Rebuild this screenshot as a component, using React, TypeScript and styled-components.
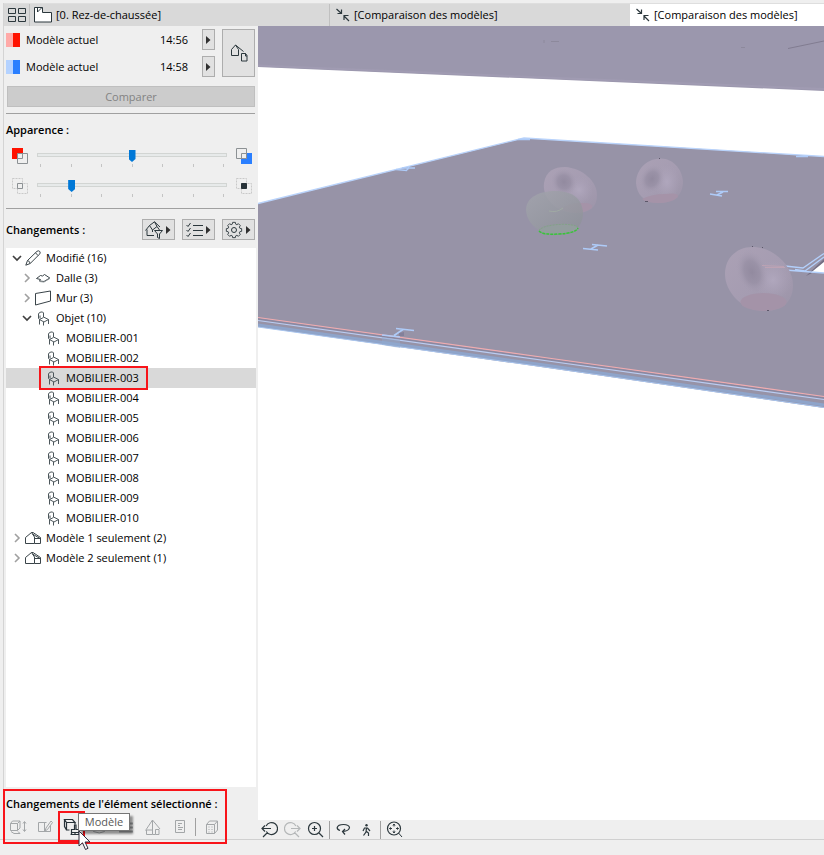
import React, { useState } from "react";
import styled, { createGlobalStyle, css } from "styled-components";

const GlobalStyle = createGlobalStyle`
  * { box-sizing: border-box; }
  body {
    margin: 0;
    background: #efefef;
    color: #000;
    font-family: "Open Sans", "Noto Sans", sans-serif;
    font-size: 11px;
    line-height: 20px;
  }
  button, input { font: inherit; color: inherit; margin: 0; padding: 0; }
  h2 { margin: 0; font-size: 11px; font-weight: 600; line-height: 20px; white-space: nowrap; }
  ul { margin: 0; padding: 0; list-style: none; }
  svg { display: block; flex: none; }
`;

const Page = styled.div`
  display: flex;
  flex-direction: column;
  min-height: 100vh;
  padding-top: 3px;
`;

const Workspace = styled.div`
  flex: 1;
  display: flex;
  flex-direction: column;
  margin-left: 3px;
  border-left: 1px solid #d4d4d4;
`;

const TabBar = styled.nav`
  display: flex;
  height: 23px;
  background: #d9d9d9;
  border-top: 1px solid #dedede;
`;

const OverviewButton = styled.button`
  width: 25px;
  border: 0;
  background: none;
  display: grid;
  place-items: center;
`;

const Tab = styled.button<{ $active?: boolean; $inset?: number }>`
  flex: 0 0 300px;
  display: flex;
  align-items: center;
  gap: 4px;
  padding: 0 ${(p) => p.$inset ?? 6}px;
  border: 0;
  border-left: 1px solid ${(p) => (p.$active ? "#d9d9d9" : "#c0c0c0")};
  background: ${(p) => (p.$active ? "#fff" : "none")};
  white-space: nowrap;

  &:last-child { flex: 1 0 194px; }
`;

const Columns = styled.div`
  flex: 1;
  display: flex;
`;

const Panel = styled.aside`
  flex: 0 0 254px;
  display: flex;
  flex-direction: column;
  padding-left: 2px;
`;

const Models = styled.section`
  display: grid;
  grid-template-columns: 14px 1fr auto 13px 40px;
  grid-template-rows: 21px 21px;
  row-gap: 6px;
  align-items: center;
  margin: 3px 3px 0 0;
`;

const Swatch = styled.span<{ $light: string; $dark: string }>`
  height: 14px;
  background: linear-gradient(90deg, ${(p) => p.$light} 50%, ${(p) => p.$dark} 50%);
`;

const ModelName = styled.span`
  padding-left: 6px;
`;

const ModelTime = styled.time`
  padding-right: 14px;
`;

const buttonFace = css`
  border: 1px solid #adadad;
  background: #e1e1e1;
`;

const ArrowButton = styled.button`
  ${buttonFace}
  align-self: stretch;
  display: grid;
  place-items: center;
`;

const PickButton = styled.button`
  ${buttonFace}
  grid-column: 5;
  grid-row: 1 / 3;
  align-self: stretch;
  display: grid;
  place-items: center;
  margin-left: 7px;
`;

const CompareButton = styled.button`
  height: 21px;
  margin: 9px 3px 0 1px;
  border: 1px solid #bfbfbf;
  background: #cccccc;
  color: #838383;
  line-height: 19px;
`;

const Divider = styled.hr<{ $space: number }>`
  align-self: stretch;
  height: 1px;
  margin: ${(p) => p.$space}px 3px 0 0;
  border: 0;
  background: #a0a0a0;
`;

const Appearance = styled.section`
  margin-top: 6px;

  h2 { margin-bottom: 1px; }
`;

const SliderRow = styled.div`
  display: flex;
  align-items: center;
  height: 30px;
  padding: 0 6px;
`;

const SliderBody = styled.label`
  flex: 1;
  align-self: flex-start;
  margin: 9px 9px 0;
`;

const Range = styled.input`
  appearance: none;
  display: block;
  width: 100%;
  height: 10px;
  background: none;

  &::-webkit-slider-runnable-track {
    height: 4px;
    border: 1px solid #d2d5d3;
    background: #e7eaea;
  }
  &::-webkit-slider-thumb {
    appearance: none;
    width: 7px;
    height: 12px;
    margin-top: -4px;
    background: #0078d7;
    clip-path: polygon(0 0, 100% 0, 100% 75%, 50% 100%, 0 75%);
  }
`;

const Ticks = styled.span`
  display: flex;
  justify-content: space-between;
  height: 3px;
  margin: 4px 3px 0;
`;

const Tick = styled.i`
  width: 1px;
  background: #c4c4c4;
`;

const ChangesHeader = styled.header`
  display: flex;
  align-items: center;
  gap: 7px;
  margin: 10px 3px 0 0;

  h2 { flex: 1; }
`;

const MenuButton = styled.button`
  ${buttonFace}
  display: flex;
  align-items: center;
  justify-content: space-between;
  width: 33px;
  height: 21px;
  padding: 0 3px 0 2px;
`;

const Tree = styled.ul`
  flex: 1;
  margin: 8px 2px 0 0;
  background: #fff;
`;

const TreeRow = styled.button<{ $level: number; $selected?: boolean }>`
  display: flex;
  align-items: center;
  width: 100%;
  height: 20px;
  padding-left: ${(p) => 6 + p.$level * 10}px;
  border: 0;
  background: ${(p) => (p.$selected ? "#d9d9d9" : "none")};
  text-align: left;
`;

const Twisty = styled.span`
  width: 10px;
  margin-right: 3px;
`;

const RowLabel = styled.span<{ $framed?: boolean }>`
  position: relative;
  display: flex;
  align-items: center;
  gap: 5px;

  ${(p) =>
    p.$framed &&
    css`
      &::after {
        content: "";
        position: absolute;
        inset: -2px -9px -2px -6px;
        border: 2px solid #f8141a;
      }
    `}
`;

const Footer = styled.footer`
  position: relative;
  padding-top: 7px;
`;

const FooterFrame = styled.div`
  position: absolute;
  inset: 2px 31px -5px -3px;
  border: 2px solid #f8141a;
  pointer-events: none;
`;

const FooterTools = styled.div`
  display: flex;
  align-items: center;
  height: 25px;
  margin-left: -2px;
`;

const ToolSlot = styled.div`
  position: relative;
`;

const ToolButton = styled.button<{ $highlight?: boolean }>`
  position: relative;
  display: grid;
  place-items: center;
  width: 27px;
  height: 25px;
  border: 0;
  background: none;
  color: ${(p) => (p.$highlight ? "#273238" : "#a3a6a8")};

  ${(p) =>
    p.$highlight &&
    css`
      &::after {
        content: "";
        position: absolute;
        inset: -3px 0;
        border: 2px solid #f8141a;
      }
    `}
`;

const Tooltip = styled.div`
  position: absolute;
  z-index: 2;
  left: 20px;
  top: -1px;
  width: 52px;
  height: 18px;
  border: 1px solid #767676;
  background: #fff;
  box-shadow: 3px 3px 2px rgba(0, 0, 0, 0.4);
  color: #575757;
  line-height: 16px;
  text-align: center;
`;

const Pointer = styled.svg`
  position: absolute;
  z-index: 3;
  left: 20px;
  top: 16px;
`;

const Separator = styled.span`
  width: 1px;
  height: 18px;
  margin: 0 2px;
  background: #a0a0a0;
`;

const Main = styled.main`
  flex: 1;
  min-width: 0;
  display: flex;
  flex-direction: column;
`;

const Scene = styled.svg`
  flex: 1 1 0;
  width: 100%;
  min-height: 0;
  background: #fff;
`;

const NavBar = styled.div`
  display: flex;
  align-items: center;
  height: 19px;
`;

const NavButton = styled.button`
  display: grid;
  place-items: center;
  width: 23px;
  height: 19px;
  border: 0;
  background: none;
  color: #2b373c;

  &:disabled { color: #b4b7b8; }
`;

const StatusBar = styled.div`
  height: 16px;
  border-top: 1px solid #d0d0d0;
`;

type IconProps = { w?: number; h?: number; children: React.ReactNode };

const Icon = ({ w = 16, h = 16, children }: IconProps) => (
  <svg width={w} height={h} viewBox={`0 0 ${w} ${h}`} fill="none" stroke="currentColor" aria-hidden="true">
    {children}
  </svg>
);

const RightArrow = () => (
  <Icon w={5} h={8}>
    <path d="M0 0L4.500 4L0 8Z" fill="#303030" stroke="none" />
  </Icon>
);

const OverviewIcon = () => (
  <Icon w={18} h={14}>
    <path d="M.5 .5h7v5h-7zM10.500 .5h7v5h-7zM.5 8.500h7v5h-7zM10.500 8.500h7v5h-7z" stroke="#2b373c" />
  </Icon>
);

const PlanIcon = () => (
  <Icon w={18} h={16}>
    <path d="M.5 .5h8v5h9v9.500h-17z" fill="#fff" stroke="#2b373c" />
    <path d="M3.500 .5v4.500L8 .5" stroke="#2b373c" />
  </Icon>
);

const CompareIcon = () => (
  <Icon w={14} h={14}>
    <path d="M.5 1L5.500 5.500M5.500 1.500v4h-4M13 13L8 8M8 12V7.500h4.500" stroke="#2b373c" strokeWidth="1.200" />
  </Icon>
);

const HousePageIcon = () => (
  <Icon w={18} h={18}>
    <path d="M1.500 11.500V5.500L5.500 1L8.500 5.500V11.500ZM5.500 1L13.500 7.500M11.500 9.500h4l1.500 2v5.500h-5.500zM15.500 9.500v2.500h1.500" stroke="#2b373c" />
  </Icon>
);

const Gear = () => (
  <Icon w={18} h={18}>
    <g stroke="#2b373c">
      <circle cx="9" cy="9" r="2.500" />
      <path d="M7.500 1.500h3l.4 2 1.300.6 1.700-1.100 2.100 2.100-1.100 1.700.6 1.300 2 .4v3l-2 .4-.6 1.300 1.100 1.700-2.100 2.100-1.700-1.100-1.300.6-.4 2h-3l-.4-2-1.300-.6-1.700 1.100L2 14.900l1.100-1.700-.6-1.300-2-.4v-3l2-.4.6-1.300L2 5.100 4.100 3l1.700 1.100 1.300-.6z" transform="translate(.9 0) scale(.9)" />
    </g>
  </Icon>
);

const Checklist = () => (
  <Icon w={18} h={16}>
    <path d="M1.500 3l1.500 1.500L5.500 1M1.500 8l1.500 1.500L5.500 6M1.500 13l1.500 1.500L5.500 11M8 3.500h10M8 8.500h10M8 13.500h10" stroke="#2b373c" />
  </Icon>
);

const FilterHouse = () => (
  <Icon w={18} h={18}>
    <path d="M.5 9.500L4.500 4.500L9.500 .8L15 6M4.500 4.500L7.500 9L12 5.500L9.500 .8M12 5.500L14.500 9M2 8.500V14.500H9M7.500 9V11" stroke="#2b373c" />
    <path d="M9.500 9.500h8l-3 3.500v4.500l-2-1v-3.500z" fill="#e1e1e1" stroke="#2b373c" />
  </Icon>
);

const Chevron = ({ open }: { open?: boolean }) =>
  open ? (
    <Icon w={10} h={8}>
      <path d="M1 2L5 6L9 2" stroke="#404040" strokeWidth="1.700" />
    </Icon>
  ) : (
    <Icon w={10} h={10}>
      <path d="M3 1L7 5L3 9" stroke="#a0a0a0" strokeWidth="1.600" />
    </Icon>
  );

const Pencil = () => (
  <Icon>
    <path d="M.8 15.200L2.500 10.500L12 1.300Q13.500.2 14.800 1.500Q15.800 3 14.500 4.200L5.200 13.500ZM2.500 10.500Q4.800 11 5.200 13.500M10.500 2.800L13 5.500" stroke="#3a4449" />
  </Icon>
);

const Slab = () => (
  <Icon>
    <path d="M1.500 8.500L5.500 5.500L7.500 6L9.500 4.500L14.800 8L9 11.500L4.500 11L5.500 9.500Z" stroke="#3a4449" />
    <path d="M4.500 11.500L9 12L14.800 8.500" stroke="#8b9295" />
  </Icon>
);

const Wall = () => (
  <Icon>
    <path d="M.5 3.500L15.500 1V11L.5 15Z" stroke="#3a4449" />
  </Icon>
);

const Chair = () => (
  <Icon>
    <path
      d="M4.500 14.500V9.500L3.500 8.500V4Q3.800 2.500 6 2Q8 1.500 8.500 3V7L13.500 9.500V14M4.500 9.500L8.500 7.500M4.500 9.500L9 12L13.500 9.500M8.500 12V15.500M5 5.500V8.500"
      stroke="#4c565b"
    />
  </Icon>
);

const HouseModel = () => (
  <Icon>
    <path d="M.5 13.500V7.500L6.500 2.500L9.500 7V13.500ZM6.500 2.500H8L15.500 7.500V13.500H9.500M7.500 4L15 8.500H9.500" stroke="#3a4449" />
  </Icon>
);

const SideA = () => (
  <Icon>
    <path d="M0 0h11v11h-11z" fill="#ff1200" stroke="none" />
    <path d="M5.500 5.500h10v10h-10z" fill="#efefef" stroke="#8c9194" />
    <path d="M10.500 5.500v5h-5" stroke="#8c9194" />
  </Icon>
);

const SideB = () => (
  <Icon>
    <path d="M5 5h11v11h-11z" fill="#2a7fff" stroke="none" />
    <path d="M.5 .5h10v10h-10z" fill="#efefef" stroke="#8c9194" />
    <path d="M5.500 10.500v-5h5" stroke="#8c9194" />
  </Icon>
);

const Overlap = ({ solid }: { solid?: boolean }) => (
  <Icon>
    <path d="M.5 .5h10v10h-10zM5.500 5.500h10v10h-10z" stroke="#c9c9c9" strokeDasharray="2 1" />
    <path d="M5.500 5.500h5v5h-5z" fill={solid ? "#273238" : "#efefef"} stroke={solid ? "#273238" : "#8c9194"} />
  </Icon>
);

const toolIcons = {
  position: (
    <Icon w={18} h={16}>
      <path d="M1.500 4.500h7v7h-7zM1.500 4.500l2-2.500h7.500v7l-2.500 2.500M8.500 4.500l2.500-2.500M2 12.500l3 2h6l-2-2M15.500 3v9M14 4.500l1.500-2 1.500 2M14 10.500l1.500 2 1.500-2" />
    </Icon>
  ),
  shape: (
    <Icon>
      <path d="M9.500 3.500h-8v9h12v-6M7.500 3.500v9M8 12l1-3 5-7 1.500 1.500-5 7z" />
    </Icon>
  ),
  model: (
    <Icon w={18} h={18}>
      <path d="M3.500 4.500L1.500 1.500h8l2.500 3h-8.500v7.500h3M1.500 1.500v7l2 3.500M12 4.500v2" strokeWidth="1.200" />
      <path d="M11.500 7h1.500v4.500h3v3h-7.500v-3h3zM7.500 16.500h10M9 14.500l-1 2M12 14.500v2M16 14.500v2" strokeWidth="1.200" />
    </Icon>
  ),
  surface: (
    <Icon>
      <path d="M2.500 5.500h11v7q-5 3-11 0z" />
    </Icon>
  ),
  layers: (
    <Icon>
      <path d="M1 4.500h14M1 8.500h14M1 12.500h14" strokeWidth="2" />
    </Icon>
  ),
  renovation: (
    <Icon>
      <path d="M.5 11.500L7.500 1L15 10M7.500 1V15.500H1.500V11H7.500M10.500 15.500v-5h3.500v5zM7.500 15.500h3" />
    </Icon>
  ),
  properties: (
    <Icon>
      <path d="M3.500 1.500h9v12h-9zM6 4.500h4M6 6.500h2M6 8.500h5M6 10.500h4" />
    </Icon>
  ),
  building: (
    <Icon>
      <path d="M2.500 5.500h8v9h-8zM2.500 5.500l3-3.500h8l-3 3.500M13.500 2v9l-3 3.500M4.500 8h1M7.500 8h1M4.500 10.500h1M7.500 10.500h1M4.500 13h1M7.500 13h1" />
    </Icon>
  ),
};

const ZoomBackIcon = () => (
  <Icon w={17} h={17}>
    <path d="M5.100 5a6 6 0 1 1 .2 5.500M1 7.500H10M4 4.500L1 7.500L4 10.500M6.500 11.500L2 16" strokeWidth="1.200" />
  </Icon>
);

const ZoomForwardIcon = () => (
  <Icon w={17} h={17}>
    <path d="M11.900 5a6 6 0 1 0 -.2 5.500M7 7.500H16M13 4.500L16 7.500L13 10.500M10.500 11.500L15 16" strokeWidth="1.200" />
  </Icon>
);

const ZoomInIcon = () => (
  <Icon w={17} h={17}>
    <circle cx="7.500" cy="7.500" r="6" strokeWidth="1.200" />
    <path d="M7.500 5v5M5 7.500h5M12 12l4 4" strokeWidth="1.200" />
  </Icon>
);

const OrbitIcon = () => (
  <Icon w={15} h={13}>
    <path d="M4 7.500Q1 6.500 1.200 4.500Q2 1.500 7.500 1.500Q13 1.500 13.500 4.500Q13 8 7 8.500M9 6L6.500 8.500L9 11.500" strokeWidth="1.200" />
  </Icon>
);

const WalkIcon = () => (
  <Icon w={11} h={14}>
    <circle cx="5.500" cy="2.200" r="1.200" fill="currentColor" stroke="none" />
    <path d="M2 8L3.500 5H6.500L9 8M5.500 5L5 9L2.500 12.500M5.500 8.500L7.500 10V13" strokeWidth="1.200" />
  </Icon>
);

const FitIcon = () => (
  <Icon w={17} h={17}>
    <circle cx="8" cy="7.500" r="6.500" strokeWidth="1.200" />
    <path d="M12.500 12l3.500 4M8 3v2.500M8 9.500V12M3.500 7.500H6M10 7.500h2.500M7 4.500L8 3l1 1.500M7 10.500L8 12l1-1.500M5 6.500L3.500 7.500 5 8.500M11 6.500l1.500 1L11 8.500" />
  </Icon>
);

const Slider = ({ name, initial, left, right }: { name: string; initial: number; left: React.ReactNode; right: React.ReactNode }) => {
  const [value, setValue] = useState(initial);
  return (
    <SliderRow>
      {left}
      <SliderBody>
        <Range type="range" aria-label={name} min={0} max={6} value={value} onChange={(e) => setValue(Number(e.target.value))} />
        <Ticks>
          {[0, 1, 2, 3, 4, 5, 6].map((n) => (
            <Tick key={n} />
          ))}
        </Ticks>
      </SliderBody>
      {right}
    </SliderRow>
  );
};

type Node = { label: string; level: number; icon: React.ReactNode; open?: boolean };

const objects: Node[] = Array.from({ length: 10 }, (_, i) => ({
  label: `MOBILIER-${String(i + 1).padStart(3, "0")}`,
  level: 2,
  icon: <Chair />,
}));

const nodes: Node[] = [
  { label: "Modifié (16)", level: 0, icon: <Pencil />, open: true },
  { label: "Dalle (3)", level: 1, icon: <Slab />, open: false },
  { label: "Mur (3)", level: 1, icon: <Wall />, open: false },
  { label: "Objet (10)", level: 1, icon: <Chair />, open: true },
  ...objects,
  { label: "Modèle 1 seulement (2)", level: 0, icon: <HouseModel />, open: false },
  { label: "Modèle 2 seulement (1)", level: 0, icon: <HouseModel />, open: false },
];

const ModelView = () => (
  <Scene viewBox="258 26 566 794" preserveAspectRatio="xMinYMin slice" role="img" aria-label="Vue 3D">
    <defs>
      <linearGradient id="seat" x1="0" y1="0" x2="1" y2="1">
        <stop offset="0" stopColor="#aba1b5" />
        <stop offset=".55" stopColor="#a59cb1" />
        <stop offset="1" stopColor="#9c94a8" />
      </linearGradient>
      <radialGradient id="hollow">
        <stop offset="0" stopColor="#928a9f" />
        <stop offset=".5" stopColor="#978fa4" stopOpacity=".8" />
        <stop offset="1" stopColor="#a69db2" stopOpacity="0" />
      </radialGradient>
      <radialGradient id="shine">
        <stop offset="0" stopColor="#b0a7bd" />
        <stop offset="1" stopColor="#aaa1b7" stopOpacity="0" />
      </radialGradient>
      <linearGradient id="green" x1="0" y1="0" x2="1" y2="1">
        <stop offset="0" stopColor="#a3a5ad" />
        <stop offset="1" stopColor="#8c9097" />
      </linearGradient>
    </defs>

    <path d="M258 26H824V91L258 67Z" fill="#9b97ad" />
    <path d="M258 65.500L824 89" stroke="#a09bb2" strokeWidth="2" />
    <path d="M788 48.500L824 41" stroke="#817c90" />
    <path d="M741 47.500h4M551 41.500h8M544 40v3" stroke="#8d899c" />

    <path d="M258 203.500L524 138L824 156.500V408L548 368L258 327Z" fill="#9793a7" />
    <path d="M258 203.500L524 138L824 156.500" fill="none" stroke="#b9d3fb" strokeWidth="1.300" />
    <path d="M258 325L548 365.500L824 405" fill="none" stroke="#8ea4ca" strokeWidth="3" />
    <path d="M258 327L548 367.500L824 407.500" fill="none" stroke="#a8c6f0" />
    <path d="M258 317.500L548 358L824 396.500" fill="none" stroke="#f0acb0" strokeWidth="1.200" />
    <path d="M258 319L548 359.500L824 398" fill="none" stroke="#8986a0" />
    <path d="M258 320.500L548 361L824 399.500" fill="none" stroke="#b9cdf3" strokeWidth="1.200" />

    <g fill="none" stroke="#aecbf8" strokeWidth="1.700">
      <path d="M396 169.500l11 1M402 168h13M407 170l2-3M518 139.500h12M796 156.500h12" />
      <path d="M710 194l12 2M716 191.500h12M717 195l6-3" />
      <path d="M583 248.500l15 1.500M592 244.500l15 1.500M591 249l7-4" />
      <path d="M382 335l18 2M396 328.500l18 2M394 335.500l9-6" />
    </g>
    <path d="M399 333l5-1v4h-5z" fill="#83809a" />
    <path d="M382 337l18 3v8l-18-3z" fill="#8fa9cf" opacity=".5" />

    <path d="M806 276L824 259V262L812 273Z" fill="#746f83" />
    <path d="M811 272.500L824 262V273Z" fill="#fff" />
    <path d="M785 266L803 268L824 253.500M785 270L824 273M795 269.500L805 271L824 257" fill="none" stroke="#b3cffa" strokeWidth="1.400" />

    <path d="M544 183C546 171 554 167 565 167C582 168 597 181 597 195C597 207 590 213 575 213C557 213 542 199 544 183Z" fill="url(#seat)" />
    <ellipse cx="579" cy="190" rx="14" ry="14" fill="url(#shine)" />
    <ellipse cx="564" cy="182" rx="13" ry="14" transform="rotate(-25 564 182)" fill="url(#hollow)" />
    <path d="M562 209Q567 202 583 203Q594 203 592 208Q585 213 575 213Q566 212 562 209Z" fill="#a593a8" />

    <path d="M526 210C526 197 540 191 555 191C571 191 582 197 583 213C583 225 575 235 558 235C541 235 527 225 526 210Z" fill="url(#green)" opacity=".82" />
    <path d="M549 211Q557 213 563 208" fill="none" stroke="#a0aaa3" />
    <ellipse cx="558.500" cy="229.500" rx="19.500" ry="5" fill="#939d9e" transform="rotate(-4 558.500 229.500)" />
    <ellipse cx="558.500" cy="229.500" rx="19.500" ry="5" fill="none" stroke="#83a288" strokeDasharray="2 1" transform="rotate(-4 558.500 229.500)" />
    <path d="M539 231Q543 235 559 234Q576 233 578 228" fill="none" stroke="#38c43a" strokeWidth="1.500" strokeDasharray="3 1" />

    <path d="M636 183C636 170 646 159 660 158.500C674 158 683 171 683 183C682 196 674 203 657 203C643 202 637 194 636 183Z" fill="url(#seat)" />
    <ellipse cx="667" cy="182" rx="13" ry="18" fill="url(#shine)" />
    <ellipse cx="652" cy="179" rx="12" ry="15" transform="rotate(25 652 179)" fill="url(#hollow)" />
    <path d="M642 199Q652 194 665 194Q679 192 678 197Q672 203 658 203Q646 203 642 199Z" fill="#a593a8" />

    <path d="M725 274C725 257 738 247 752 247C774 247 793 266 793 285C793 302 782 311 765 311C742 311 725 292 725 274Z" fill="url(#seat)" />
    <ellipse cx="773" cy="280" rx="19" ry="20" fill="url(#shine)" />
    <ellipse cx="752" cy="272" rx="15" ry="23" transform="rotate(-18 752 272)" fill="url(#hollow)" />
    <ellipse cx="763.500" cy="302" rx="23" ry="9" fill="#a493a8" />
    <path d="M762 265.500l22 1M765 267.500h20" stroke="#bda3b4" />
    <path d="M752 246.500h1M762 247.500h1M767 310.500h2M645 201.500h3M659 158.500h1" stroke="#5d586a" />
  </Scene>
);

export default function App() {
  const [selected, setSelected] = useState("MOBILIER-003");

  return (
    <>
      <GlobalStyle />
      <Page>
        <Workspace>
          <TabBar>
            <OverviewButton aria-label="Vue d'ensemble des onglets"><OverviewIcon /></OverviewButton>
            <Tab $inset={4}><PlanIcon />[0. Rez-de-chaussée]</Tab>
            <Tab><CompareIcon />[Comparaison des modèles]</Tab>
            <Tab $active><CompareIcon />[Comparaison des modèles]</Tab>
          </TabBar>

          <Columns>
            <Panel>
              <Models>
                <Swatch $light="#ffaaa8" $dark="#ff1200" />
                <ModelName>Modèle actuel</ModelName>
                <ModelTime>14:56</ModelTime>
                <ArrowButton aria-label="Choisir le modèle 1"><RightArrow /></ArrowButton>
                <PickButton aria-label="Choisir les modèles"><HousePageIcon /></PickButton>
                <Swatch $light="#b4d2ff" $dark="#2a7fff" />
                <ModelName>Modèle actuel</ModelName>
                <ModelTime>14:58</ModelTime>
                <ArrowButton aria-label="Choisir le modèle 2"><RightArrow /></ArrowButton>
              </Models>
              <CompareButton disabled>Comparer</CompareButton>
              <Divider $space={6} />

              <Appearance>
                <h2>Apparence :</h2>
                <Slider name="Équilibre des modèles" initial={3} left={<SideA />} right={<SideB />} />
                <Slider name="Éléments inchangés" initial={1} left={<Overlap />} right={<Overlap solid />} />
              </Appearance>
              <Divider $space={7} />

              <ChangesHeader>
                <h2>Changements :</h2>
                <MenuButton aria-label="Filtrer"><FilterHouse /><RightArrow /></MenuButton>
                <MenuButton aria-label="Liste"><Checklist /><RightArrow /></MenuButton>
                <MenuButton aria-label="Réglages"><Gear /><RightArrow /></MenuButton>
              </ChangesHeader>

              <Tree>
                {nodes.map((n) => (
                  <li key={n.label}>
                    <TreeRow
                      $level={n.level}
                      $selected={n.label === selected}
                      aria-expanded={n.open}
                      onClick={() => setSelected(n.label)}
                    >
                      <Twisty>{n.open !== undefined && <Chevron open={n.open} />}</Twisty>
                      <RowLabel $framed={n.label === "MOBILIER-003"}>
                        {n.icon}
                        {n.label}
                      </RowLabel>
                    </TreeRow>
                  </li>
                ))}
              </Tree>

              <Footer>
                <h2>Changements de l'élément sélectionné :</h2>
                <FooterTools>
                  <ToolButton aria-label="Position">{toolIcons.position}</ToolButton>
                  <ToolButton aria-label="Forme">{toolIcons.shape}</ToolButton>
                  <ToolSlot>
                    <ToolButton $highlight aria-describedby="model-tip" aria-label="Modèle">{toolIcons.model}</ToolButton>
                    <Tooltip id="model-tip" role="tooltip">Modèle</Tooltip>
                    <Pointer width="14" height="21" viewBox="0 0 14 21" aria-hidden="true">
                      <path d="M1 1V16L4.500 12.800L7.500 19.500L10 18.300L7 12H12Z" fill="#fff" stroke="#2c2c3c" />
                    </Pointer>
                  </ToolSlot>
                  <ToolButton aria-label="Surface">{toolIcons.surface}</ToolButton>
                  <ToolButton aria-label="Calque">{toolIcons.layers}</ToolButton>
                  <ToolButton aria-label="Rénovation">{toolIcons.renovation}</ToolButton>
                  <ToolButton aria-label="Propriétés">{toolIcons.properties}</ToolButton>
                  <Separator />
                  <ToolButton aria-label="Bâtiment">{toolIcons.building}</ToolButton>
                </FooterTools>
                <FooterFrame />
              </Footer>
            </Panel>

            <Main>
              <ModelView />
              <NavBar>
                <NavButton aria-label="Zoom précédent"><ZoomBackIcon /></NavButton>
                <NavButton aria-label="Zoom suivant" disabled><ZoomForwardIcon /></NavButton>
                <NavButton aria-label="Agrandir"><ZoomInIcon /></NavButton>
                <Separator />
                <NavButton aria-label="Orbite"><OrbitIcon /></NavButton>
                <NavButton aria-label="Explorer"><WalkIcon /></NavButton>
                <Separator />
                <NavButton aria-label="Ajuster à la fenêtre"><FitIcon /></NavButton>
              </NavBar>
            </Main>
          </Columns>
        </Workspace>
        <StatusBar />
      </Page>
    </>
  );
}
